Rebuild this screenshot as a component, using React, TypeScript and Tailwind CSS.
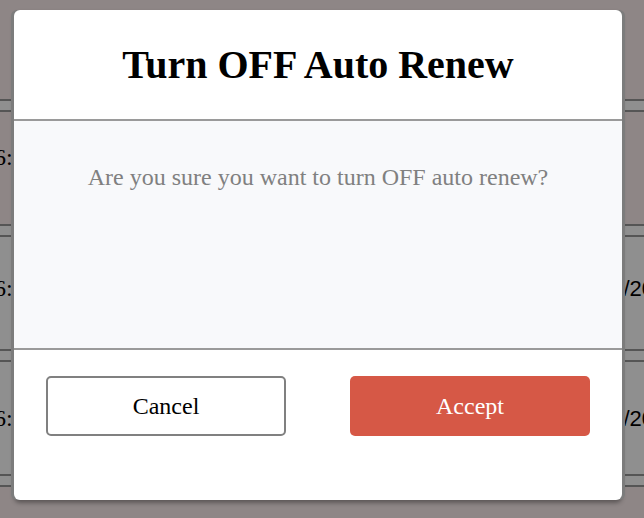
import React from "react";

const serif = { fontFamily: '"Liberation Serif", "Times New Roman", serif' };

function Divider() {
  return (
    <div className="flex flex-col">
      <div className="h-[2px] bg-[#555555]" />
      <div className="h-[9px] bg-[#8f8f8f]" />
      <div className="h-[2px] bg-[#555555]" />
    </div>
  );
}

function Row({ tone, left, right, shift = "" }: { tone: string; left?: string; right?: string; shift?: string }) {
  return (
    <div className={`flex h-[112px] items-center justify-between ${tone} ${shift}`}>
      <span className="-ml-[6px] text-[24px] text-black" style={serif}>
        {left}
      </span>
      <span
        className="-mr-[10px] text-[22px] text-black"
        style={{ fontFamily: '"Liberation Sans", Arial, sans-serif' }}
      >
        {right}
      </span>
    </div>
  );
}

export default function App() {
  return (
    <div className="relative h-[518px] w-[644px] overflow-hidden bg-[#8e8686]">
      {/* page behind the dim overlay */}
      <div className="flex flex-col">
        <div className="h-[99px]" />
        <Divider />
        <Row tone="bg-[#8e8686]" left="6:" shift="pb-[22px]" />
        <Divider />
        <Row tone="bg-[#8f8f8f]" left="6:" right="/20" shift="pb-[10px]" />
        <Divider />
        <Row tone="bg-[#8f8f8f]" left="6:" right="/20" />
        <Divider />
      </div>

      {/* modal */}
      <div
        className="absolute left-[14px] top-[10px] flex h-[490px] w-[608px] flex-col overflow-hidden rounded-[6px] bg-white shadow-[-3px_0_0_#7c7c7c,3px_0_0_#7c7c7c,0_3px_4px_rgba(0,0,0,0.35)]"
        style={serif}
      >
        <div className="flex h-[111px] items-center justify-center border-b-2 border-[#9a9a9a]">
          <h2 className="text-[40px] font-bold leading-none text-black">Turn OFF Auto Renew</h2>
        </div>
        <div className="h-[229px] border-b-2 border-[#9a9a9a] bg-[#f8f9fb] pt-[41px] text-center">
          <p className="text-[24px] leading-[30px] text-[#808080]">Are you sure you want to turn OFF auto renew?</p>
        </div>
        <div className="flex flex-1 items-start justify-between px-[32px] pt-[26px]">
          <button className="flex h-[60px] w-[240px] items-center justify-center rounded-[5px] border-2 border-[#808080] bg-white text-[24px] text-black">
            Cancel
          </button>
          <button className="flex h-[60px] w-[240px] items-center justify-center rounded-[5px] bg-[#d65846] text-[24px] text-white">
            Accept
          </button>
        </div>
      </div>
    </div>
  );
}
